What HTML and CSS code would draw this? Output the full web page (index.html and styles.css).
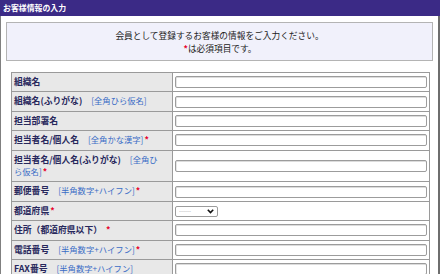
FILE: index.html
```html
<!DOCTYPE html>
<html lang="ja">
<head>
<meta charset="utf-8">
<title>お客様情報の入力</title>
<link rel="stylesheet" href="styles.css">
</head>
<body>
<div class="header">お客様情報の入力</div>
<div class="frame">
  <div class="notice">
    <p>会員として登録するお客様の情報をご入力ください。</p>
    <p><span class="req">*</span>は必須項目です。</p>
  </div>
  <table class="form">
    <tr><th>組織名</th><td><input class="field" type="text"></td></tr>
    <tr><th>組織名(ふりがな)<span class="hint">[全角ひら仮名]</span></th><td><input class="field" type="text"></td></tr>
    <tr><th>担当部署名</th><td><input class="field" type="text"></td></tr>
    <tr><th>担当者名/個人名<span class="hint">[全角かな漢字]</span><span class="req">*</span></th><td><input class="field" type="text"></td></tr>
    <tr><th>担当者名/個人名(ふりがな)<span class="hint">[全角ひら仮名]</span><span class="req">*</span></th><td><input class="field" type="text"></td></tr>
    <tr><th>郵便番号<span class="hint">[半角数字+ハイフン]</span><span class="req">*</span></th><td><input class="field" type="text"></td></tr>
    <tr><th>都道府県<span class="req">*</span></th><td>
      <span class="selwrap"><select class="pref"><option>------</option></select><svg class="chev" width="7" height="5" viewBox="0 0 7 5"><path d="M0.8 0.8 L3.5 3.6 L6.2 0.8" fill="none" stroke="#111" stroke-width="1.6"/></svg></span>
    </td></tr>
    <tr><th>住所（都道府県以下）<span class="req sp">*</span></th><td><input class="field" type="text"></td></tr>
    <tr><th>電話番号<span class="hint">[半角数字+ハイフン]</span><span class="req">*</span></th><td><input class="field" type="text"></td></tr>
    <tr><th>FAX番号<span class="hint">[半角数字+ハイフン]</span></th><td><input class="field" type="text"></td></tr>
  </table>
</div>
</body>
</html>
```
FILE: styles.css
```css
html, body {
  margin: 0;
  padding: 0;
  background: #fff;
  font-family: "Noto Sans CJK JP", "Noto Sans", sans-serif;
}
.header {
  height: 16px;
  background: #3b2a86;
  color: #fff;
  font-weight: bold;
  font-size: 7.9px;
  line-height: 16px;
  padding-left: 3px;
  box-sizing: border-box;
}
.frame {
  border-left: 1px solid #808080;
  border-right: 2px solid #6e6e6e;
  padding: 6px 5px 0 5px;
  min-height: 258px;
  box-sizing: border-box;
}
.notice {
  border: 1px solid #b4b4b4;
  background: #f1f1fb;
  height: 39px;
  box-sizing: border-box;
  padding-top: 6px;
  text-align: center;
  color: #222;
  font-size: 8.7px;
  line-height: 13px;
}
.notice p { margin: 0; }
.req {
  color: #e8002a;
  margin-left: 1px;
  font-weight: bold;
  line-height: 1;
}
.req.sp { margin-left: 4px; }
.form {
  border-collapse: collapse;
  margin: 11px 4px 0 5px;
  width: 419px;
}
.form th, .form td {
  border: 1px solid #9a9a9a;
  padding: 3px 2px;
  line-height: 12.4px;
  height: 12.4px;
}
.form th {
  width: 148px;
  padding-right: 10px;
  background: #e8e8e8;
  color: #27275c;
  font-weight: bold;
  font-size: 8.8px;
  text-align: left;
}
.form td { background: #fff; }
.hint {
  color: #3a6cc6;
  font-weight: normal;
  font-size: 8.3px;
  line-height: 1;
  margin-left: 9px;
}
.field {
  display: block;
  width: 252px;
  height: 12px;
  box-sizing: border-box;
  margin: 0;
  padding: 0;
  border: 1px solid #9c9c9c;
  border-radius: 2px;
  box-shadow: inset 0 1px 0 #dcdcdc, inset 1px 0 0 #e6e6e6;
  background: #fff;
}
.selwrap {
  position: relative;
  display: inline-block;
  vertical-align: top;
}
.pref {
  -webkit-appearance: none;
  appearance: none;
  width: 43px;
  height: 11px;
  margin: 1px 0 0 0;
  padding: 0 0 0 3px;
  border: 1px solid #9c9c9c;
  border-radius: 2px;
  background: #fff;
  color: #aaa;
  font-size: 6px;
  line-height: 9px;
  display: block;
  font-family: "Liberation Sans", sans-serif;
}
.chev {
  position: absolute;
  right: 4px;
  top: 4px;
}
```
